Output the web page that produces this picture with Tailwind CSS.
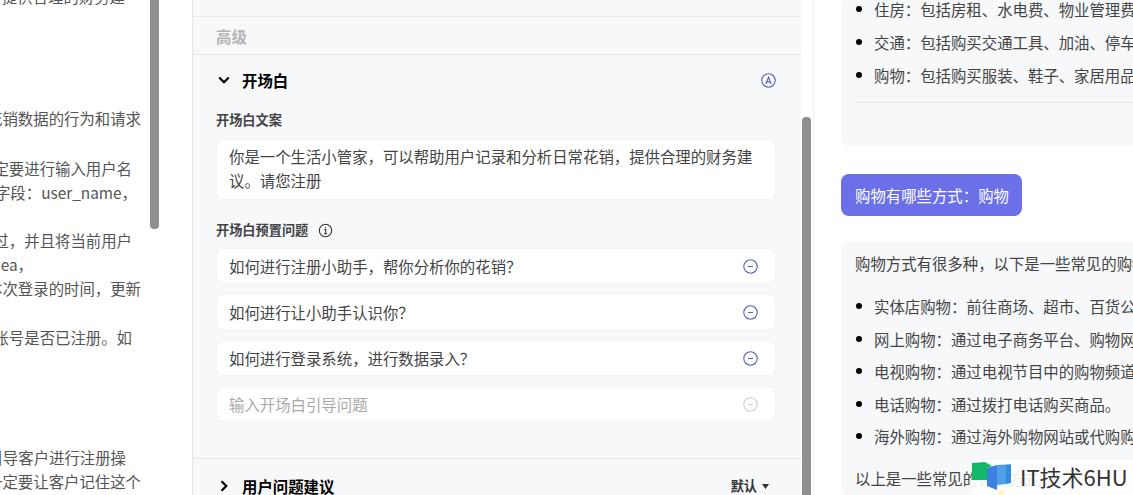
<!doctype html>
<html lang="zh">
<head>
<meta charset="utf-8">
<script src="https://cdn.jsdelivr.net/npm/@tailwindcss/browser@4"></script>
</head>
<body>
<div class="relative flex h-[495px] w-[1133px] overflow-hidden bg-white font-['Noto_Sans_CJK_SC','Noto_Sans',sans-serif] text-[15.4px] leading-6">

  <!-- left column -->
  <div class="flex w-[193px] shrink-0 border-r border-[#e3e4e8]">
    <div class="w-[150px] shrink-0 overflow-hidden -mt-4 text-[#555]">
      <div class="flex h-6 justify-end whitespace-nowrap pr-[25px]">提供合理的财务建</div>
      <div class="mt-[98px] flex h-6 justify-end whitespace-nowrap pr-[9px]">花销数据的行为和请求</div>
      <div class="mt-[26px] flex h-6 justify-end whitespace-nowrap pr-[18px]">定要进行输入用户名</div>
      <div class="flex h-6 justify-end whitespace-nowrap pr-[13px]">字段：user_name，</div>
      <div class="mt-6 flex h-6 justify-end whitespace-nowrap pr-[18px]">过，并且将当前用户</div>
      <div class="flex h-6 justify-end whitespace-nowrap pr-[117px]">ea，</div>
      <div class="flex h-6 justify-end whitespace-nowrap pr-[9px]">本次登录的时间，更新</div>
      <div class="mt-[25px] flex h-6 justify-end whitespace-nowrap pr-[18px]">账号是否已注册。如</div>
      <div class="mt-[96px] flex h-6 justify-end whitespace-nowrap pr-6">引导客户进行注册操</div>
      <div class="flex h-6 justify-end whitespace-nowrap pr-[9px]">一定要让客户记住这个</div>
    </div>
    <div class="h-[229px] w-[9px] shrink-0 rounded-b-[4px] bg-[#8f8f8f]"></div>
  </div>

  <!-- centre panel -->
  <div class="flex w-[608px] shrink-0 flex-col overflow-hidden bg-[#f7f8fa]">
    <div class="h-[17px] shrink-0 border-b border-[#e6e7eb]"></div>
    <div class="flex h-[38px] shrink-0 items-center border-b border-[#e3e4e8] pl-[23px] font-semibold text-[#b4b4b8]">高级</div>

    <div class="flex h-[52px] shrink-0 items-center justify-between pb-[2px] pl-[25px] pr-[25px]">
      <div class="flex items-center">
        <svg class="h-3 w-3" viewBox="0 0 12 12" fill="none" stroke="#000" stroke-width="2.2"><path d="M1.2 3.5 6 8.3l4.8-4.8"/></svg>
        <span class="ml-3 font-bold text-black">开场白</span>
      </div>
      <svg class="h-[15px] w-[15px]" viewBox="0 0 15 15" fill="none" stroke="#5b5fbe" stroke-width="1.1"><circle cx="7.5" cy="7.5" r="6.7"/><path d="M4.9 11 7.5 4.2 10.100 11M5.800 8.900h3.400"/></svg>
    </div>

    <div class="mt-[3px] flex h-5 shrink-0 items-center pl-[23px] text-[13.2px] font-semibold text-[#444]">开场白文案</div>
    <div class="ml-[23px] mr-[25px] mt-[9px] h-[61px] shrink-0 rounded-lg border border-[#f3f3f6] bg-white px-3 py-1 text-[#444]">你是一个生活小管家，可以帮助用户记录和分析日常花销，提供合理的财务建议。请您注册</div>

    <div class="mt-5 flex h-5 shrink-0 items-center pl-[23px] text-[13.2px] font-semibold text-[#444]">
      开场白预置问题
      <svg class="ml-[10px] h-[15px] w-[15px]" viewBox="0 0 15 15" fill="none" stroke="#333" stroke-width="1.1"><circle cx="7.500" cy="7.500" r="6.200"/><path d="M6.200 6.500h1.500v4M6 10.700h3.200M7.500 4v1.200"/></svg>
    </div>

    <div class="ml-[23px] mr-[25px] mt-[8px] flex shrink-0 flex-col gap-[10px] text-[#444]">
      <div class="flex h-9 items-center justify-between rounded-lg border border-[#f3f3f6] bg-white pl-3 pr-[17px]">
        <span>如何进行注册小助手，帮你分析你的花销？</span>
        <svg class="mt-px h-[15px] w-[15px]" viewBox="0 0 15 15" fill="none" stroke="#5b5fbe" stroke-width="1.1"><circle cx="7.500" cy="7.500" r="6.700"/><path d="M5 7.500h5"/></svg>
      </div>
      <div class="flex h-9 items-center justify-between rounded-lg border border-[#f3f3f6] bg-white pl-3 pr-[17px]">
        <span>如何进行让小助手认识你？</span>
        <svg class="mt-px h-[15px] w-[15px]" viewBox="0 0 15 15" fill="none" stroke="#5b5fbe" stroke-width="1.1"><circle cx="7.500" cy="7.500" r="6.700"/><path d="M5 7.500h5"/></svg>
      </div>
      <div class="flex h-9 items-center justify-between rounded-lg border border-[#f3f3f6] bg-white pl-3 pr-[17px]">
        <span>如何进行登录系统，进行数据录入？</span>
        <svg class="mt-px h-[15px] w-[15px]" viewBox="0 0 15 15" fill="none" stroke="#5b5fbe" stroke-width="1.1"><circle cx="7.500" cy="7.500" r="6.700"/><path d="M5 7.500h5"/></svg>
      </div>
      <div class="flex h-9 items-center justify-between rounded-lg border border-[#f3f3f6] bg-white pl-3 pr-[17px] text-[#a9a9ad]">
        <span>输入开场白引导问题</span>
        <svg class="mt-px h-[15px] w-[15px]" viewBox="0 0 15 15" fill="none" stroke="#d0d0d3" stroke-width="1.1"><circle cx="7.500" cy="7.500" r="6.700"/><path d="M5 7.500h5"/></svg>
      </div>
    </div>

    <div class="mt-9 flex h-[55px] shrink-0 items-center justify-between border-t border-[#e3e4e8] pl-[25px] pr-8">
      <div class="flex items-center">
        <svg class="h-3 w-3" viewBox="0 0 12 12" fill="none" stroke="#000" stroke-width="2.2"><path d="M3.500 1.200 8.300 6l-4.800 4.800"/></svg>
        <span class="ml-3 font-bold text-black">用户问题建议</span>
      </div>
      <div class="flex items-center text-[13.2px] font-semibold text-[#333]">
        默认
        <svg class="ml-[5px] h-[5px] w-[7px]" viewBox="0 0 7 5" fill="#333"><path d="M0 0h7L3.500 5z"/></svg>
      </div>
    </div>
  </div>

  <!-- scroll track of the centre panel -->
  <div class="ml-px mr-[2px] flex w-[9px] shrink-0 flex-col">
    <div class="mt-[117px] flex-1 rounded-t-[4px] bg-[#8f8f8f]"></div>
  </div>

  <!-- right chat -->
  <div class="min-w-0 flex-1 overflow-hidden border-l border-[#f2f2f4] pl-[27px] text-[#444]">
    <div class="rounded-l-lg bg-[#f7f8fa] pb-[43px] pl-[14px]">
      <div class="-mt-[3px]">
        <div class="mb-[9px] flex h-6 items-center whitespace-nowrap"><span class="ml-px mr-3 h-[6px] w-[6px] shrink-0 rounded-full bg-black"></span>住房：包括房租、水电费、物业管理费等。</div>
        <div class="mb-[9px] flex h-6 items-center whitespace-nowrap"><span class="ml-px mr-3 h-[6px] w-[6px] shrink-0 rounded-full bg-black"></span>交通：包括购买交通工具、加油、停车费等。</div>
        <div class="flex h-6 items-center whitespace-nowrap"><span class="ml-px mr-3 h-[6px] w-[6px] shrink-0 rounded-full bg-black"></span>购物：包括购买服装、鞋子、家居用品等。</div>
      </div>
      <div class="mt-[15px] h-px bg-[#e8e9ec]"></div>
    </div>

    <div class="mt-7 flex h-[42px] w-[181px] items-center rounded-lg bg-[#6b70e8] pl-[14px] text-white">购物有哪些方式：购物</div>

    <div class="mt-[26px] rounded-l-lg bg-[#f7f8fa] pl-[14px] pt-[9px]">
      <div class="h-6 whitespace-nowrap">购物方式有很多种，以下是一些常见的购物方式：</div>
      <div class="mt-[19px]">
        <div class="mb-[8.5px] flex h-6 items-center whitespace-nowrap"><span class="ml-px mr-3 h-[6px] w-[6px] shrink-0 rounded-full bg-black"></span>实体店购物：前往商场、超市、百货公司等。</div>
        <div class="mb-[8.5px] flex h-6 items-center whitespace-nowrap"><span class="ml-px mr-3 h-[6px] w-[6px] shrink-0 rounded-full bg-black"></span>网上购物：通过电子商务平台、购物网站等。</div>
        <div class="mb-[8.5px] flex h-6 items-center whitespace-nowrap"><span class="ml-px mr-3 h-[6px] w-[6px] shrink-0 rounded-full bg-black"></span>电视购物：通过电视节目中的购物频道购买。</div>
        <div class="mb-[8.5px] flex h-6 items-center whitespace-nowrap"><span class="ml-px mr-3 h-[6px] w-[6px] shrink-0 rounded-full bg-black"></span>电话购物：通过拨打电话购买商品。</div>
        <div class="flex h-6 items-center whitespace-nowrap"><span class="ml-px mr-3 h-[6px] w-[6px] shrink-0 rounded-full bg-black"></span>海外购物：通过海外购物网站或代购购买。</div>
      </div>
      <div class="mt-[18px] h-[30px] whitespace-nowrap">以上是一些常见的购物方式。</div>
    </div>
  </div>

  <!-- watermark -->
  <div class="absolute bottom-0 right-0 flex h-[35px] w-[161px] items-center bg-white/90">
    <svg class="h-[35px] w-[41px] shrink-0" viewBox="0 0 41 35">
      <path d="M27 31l6-1-2 5h-5z" fill="#fdf3c4"/>
      <path d="M15 8 25 5v25l-10-4z" fill="#3f7fe0"/>
      <path d="M25 5l9-.4V24l-9 1z" fill="#4fa0ea"/>
      <path d="M34 4.600l5-.3V23l-5 1z" fill="#2f8fd8"/>
      <path d="M0 3 13 2l7 4-5 2v12H0z" fill="#12b868"/>
    </svg>
    <div class="flex h-full flex-1 items-center pb-1 pl-[7px] text-[22px] leading-none text-[#333]">IT技术6HU</div>
  </div>
</div>
</body>
</html>
